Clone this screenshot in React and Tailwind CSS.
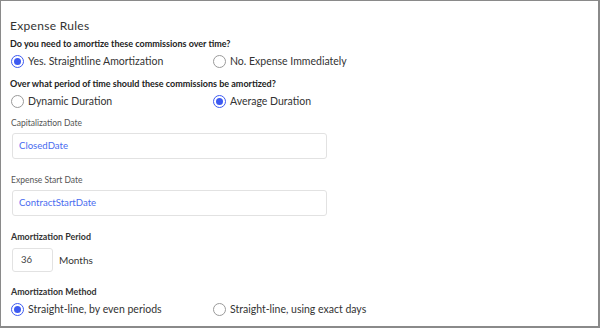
import React from "react";

function Radio({ checked, label }) {
  return (
    <div className="flex items-center gap-[4px]">
      {checked ? (
        <span className="w-[13px] h-[13px] rounded-full border-[1.5px] border-[#3d5af1] flex items-center justify-center bg-white">
          <span className="w-[7px] h-[7px] rounded-full bg-[#3d5af1]" />
        </span>
      ) : (
        <span className="w-[13px] h-[13px] rounded-full border border-[#9a9a9a] bg-white" />
      )}
      <span className="text-[10.5px] text-[#333] leading-[14px]">{label}</span>
    </div>
  );
}

function RadioRow({ a, b, first }) {
  return (
    <div className="flex items-center h-[14px]">
      <div className="w-[202px]">
        <Radio checked={first} label={a} />
      </div>
      <Radio checked={!first} label={b} />
    </div>
  );
}

export default function App() {
  return (
    <div
      className="w-[600px] h-[328px] bg-white border-t border-l border-r-2 border-b-2 border-[#8a8a8a] overflow-hidden"
      style={{ fontFamily: "Lato, 'Noto Sans', sans-serif" }}
    >
      <div className="pl-[9px] pt-[18px] flex flex-col">
        <div className="text-[12px] text-[#333] tracking-[0.3px] leading-[14px]">Expense Rules</div>
        <div className="mt-[5px] text-[9px] font-bold text-[#222] leading-[12px]">
          Do you need to amortize these commissions over time?
        </div>
        <div className="mt-[4px] pl-[1px]">
          <RadioRow first a="Yes. Straightline Amortization" b="No. Expense Immediately" />
        </div>
        <div className="mt-[10px] text-[9px] font-bold text-[#222] leading-[12px]">
          Over what period of time should these commissions be amortized?
        </div>
        <div className="mt-[4px] pl-[1px]">
          <RadioRow first={false} a="Dynamic Duration" b="Average Duration" />
        </div>
        <div className="mt-[9px] text-[8.5px] text-[#555] leading-[12px] pl-[1px]">Capitalization Date</div>
        <div className="mt-[4px] ml-[2px] w-[315px] h-[26px] border border-[#e2e2e2] rounded-[3px] flex items-center pl-[6px] text-[9.6px] text-[#4a6cf0]">
          ClosedDate
        </div>
        <div className="mt-[15px] text-[8.5px] text-[#555] leading-[12px] pl-[1px]">Expense Start Date</div>
        <div className="mt-[4px] ml-[2px] w-[315px] h-[26px] border border-[#e2e2e2] rounded-[3px] flex items-center pl-[6px] text-[9.6px] text-[#4a6cf0]">
          ContractStartDate
        </div>
        <div className="mt-[15px] text-[8.9px] font-bold text-[#333] leading-[12px] pl-[1px]">Amortization Period</div>
        <div className="mt-[5px] ml-[2px] flex items-center">
          <div className="w-[41px] h-[24px] border border-[#e2e2e2] rounded-[3px] flex items-center pl-[8px] text-[9.6px] text-[#444]">
            36
          </div>
          <span className="ml-[6px] text-[10px] text-[#333]">Months</span>
        </div>
        <div className="mt-[14px] text-[8.9px] font-bold text-[#333] leading-[12px] pl-[1px]">Amortization Method</div>
        <div className="mt-[4px] pl-[1px]">
          <RadioRow first a="Straight-line, by even periods" b="Straight-line, using exact days" />
        </div>
      </div>
    </div>
  );
}
